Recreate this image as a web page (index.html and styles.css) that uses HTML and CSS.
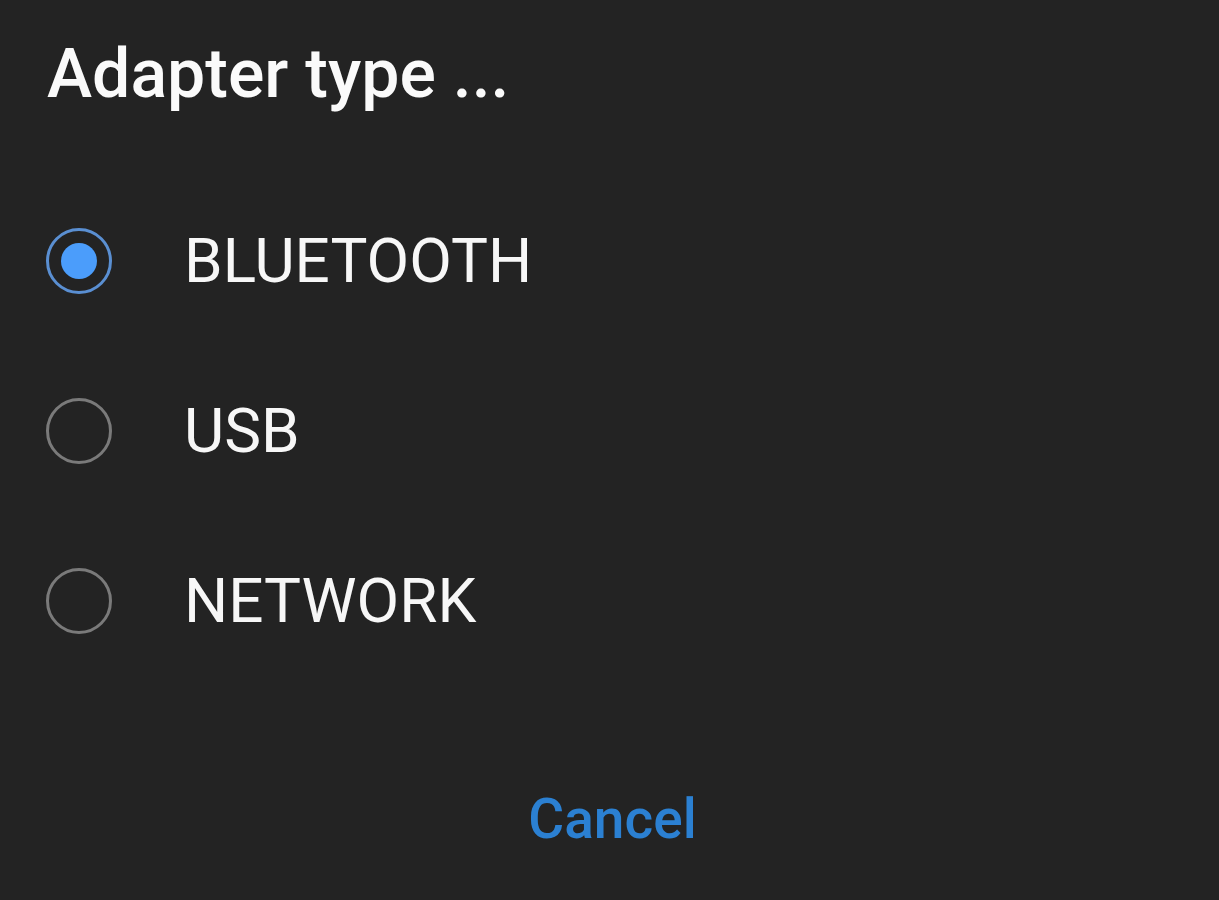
FILE: index.html
```html
<!DOCTYPE html>
<html lang="en">
<head>
    <meta charset="UTF-8">
    <meta name="viewport" content="width=device-width, initial-scale=1.0">
    <title>Adapter type</title>
    <link rel="stylesheet" href="styles.css">
</head>
<body>
    <div class="dialog">
        <h1 class="dialog-title">Adapter type ...</h1>

        <ul class="options">
            <li class="option checked">
                <span class="radio"><span class="dot"></span></span>
                <span class="label">BLUETOOTH</span>
            </li>
            <li class="option">
                <span class="radio"></span>
                <span class="label">USB</span>
            </li>
            <li class="option">
                <span class="radio"></span>
                <span class="label">NETWORK</span>
            </li>
        </ul>

        <div class="actions">
            <button class="cancel-btn">Cancel</button>
        </div>
    </div>
</body>
</html>
```

FILE: styles.css
```css
html, body {
    margin: 0;
    height: 100%;
    background-color: #232323;
}
body {
    font-family: Roboto, 'Noto Sans', sans-serif;
    color: #fff;
}

.dialog {
    padding: 40px 0 0 46px;
}

.dialog-title {
    margin: 0 0 0 1px;
    font-size: 68px;
    font-weight: 500;
    line-height: 1;
    color: #fafafa;
}

.options {
    list-style: none;
    margin: 68px 0 0;
    padding: 0;
}
.option {
    height: 170px;
    display: flex;
    align-items: center;
}

.radio {
    box-sizing: border-box;
    width: 66px;
    height: 66px;
    border: 3px solid #7a7a7a;
    border-radius: 50%;
    display: flex;
    align-items: center;
    justify-content: center;
    flex-shrink: 0;
}
.option.checked .radio {
    border-color: #5a8fd2;
}
.dot {
    width: 36px;
    height: 36px;
    border-radius: 50%;
    background-color: #4b9dfb;
}

.label {
    margin-left: 72px;
    font-size: 62px;
    line-height: 1;
    color: #f7f7f7;
}

.actions {
    margin: 106px 0 0 -40px;
    text-align: center;
}
.cancel-btn {
    background: none;
    border: none;
    padding: 0;
    font-family: inherit;
    font-size: 55px;
    font-weight: 500;
    line-height: 1;
    color: #2b80d2;
    cursor: pointer;
}
```
